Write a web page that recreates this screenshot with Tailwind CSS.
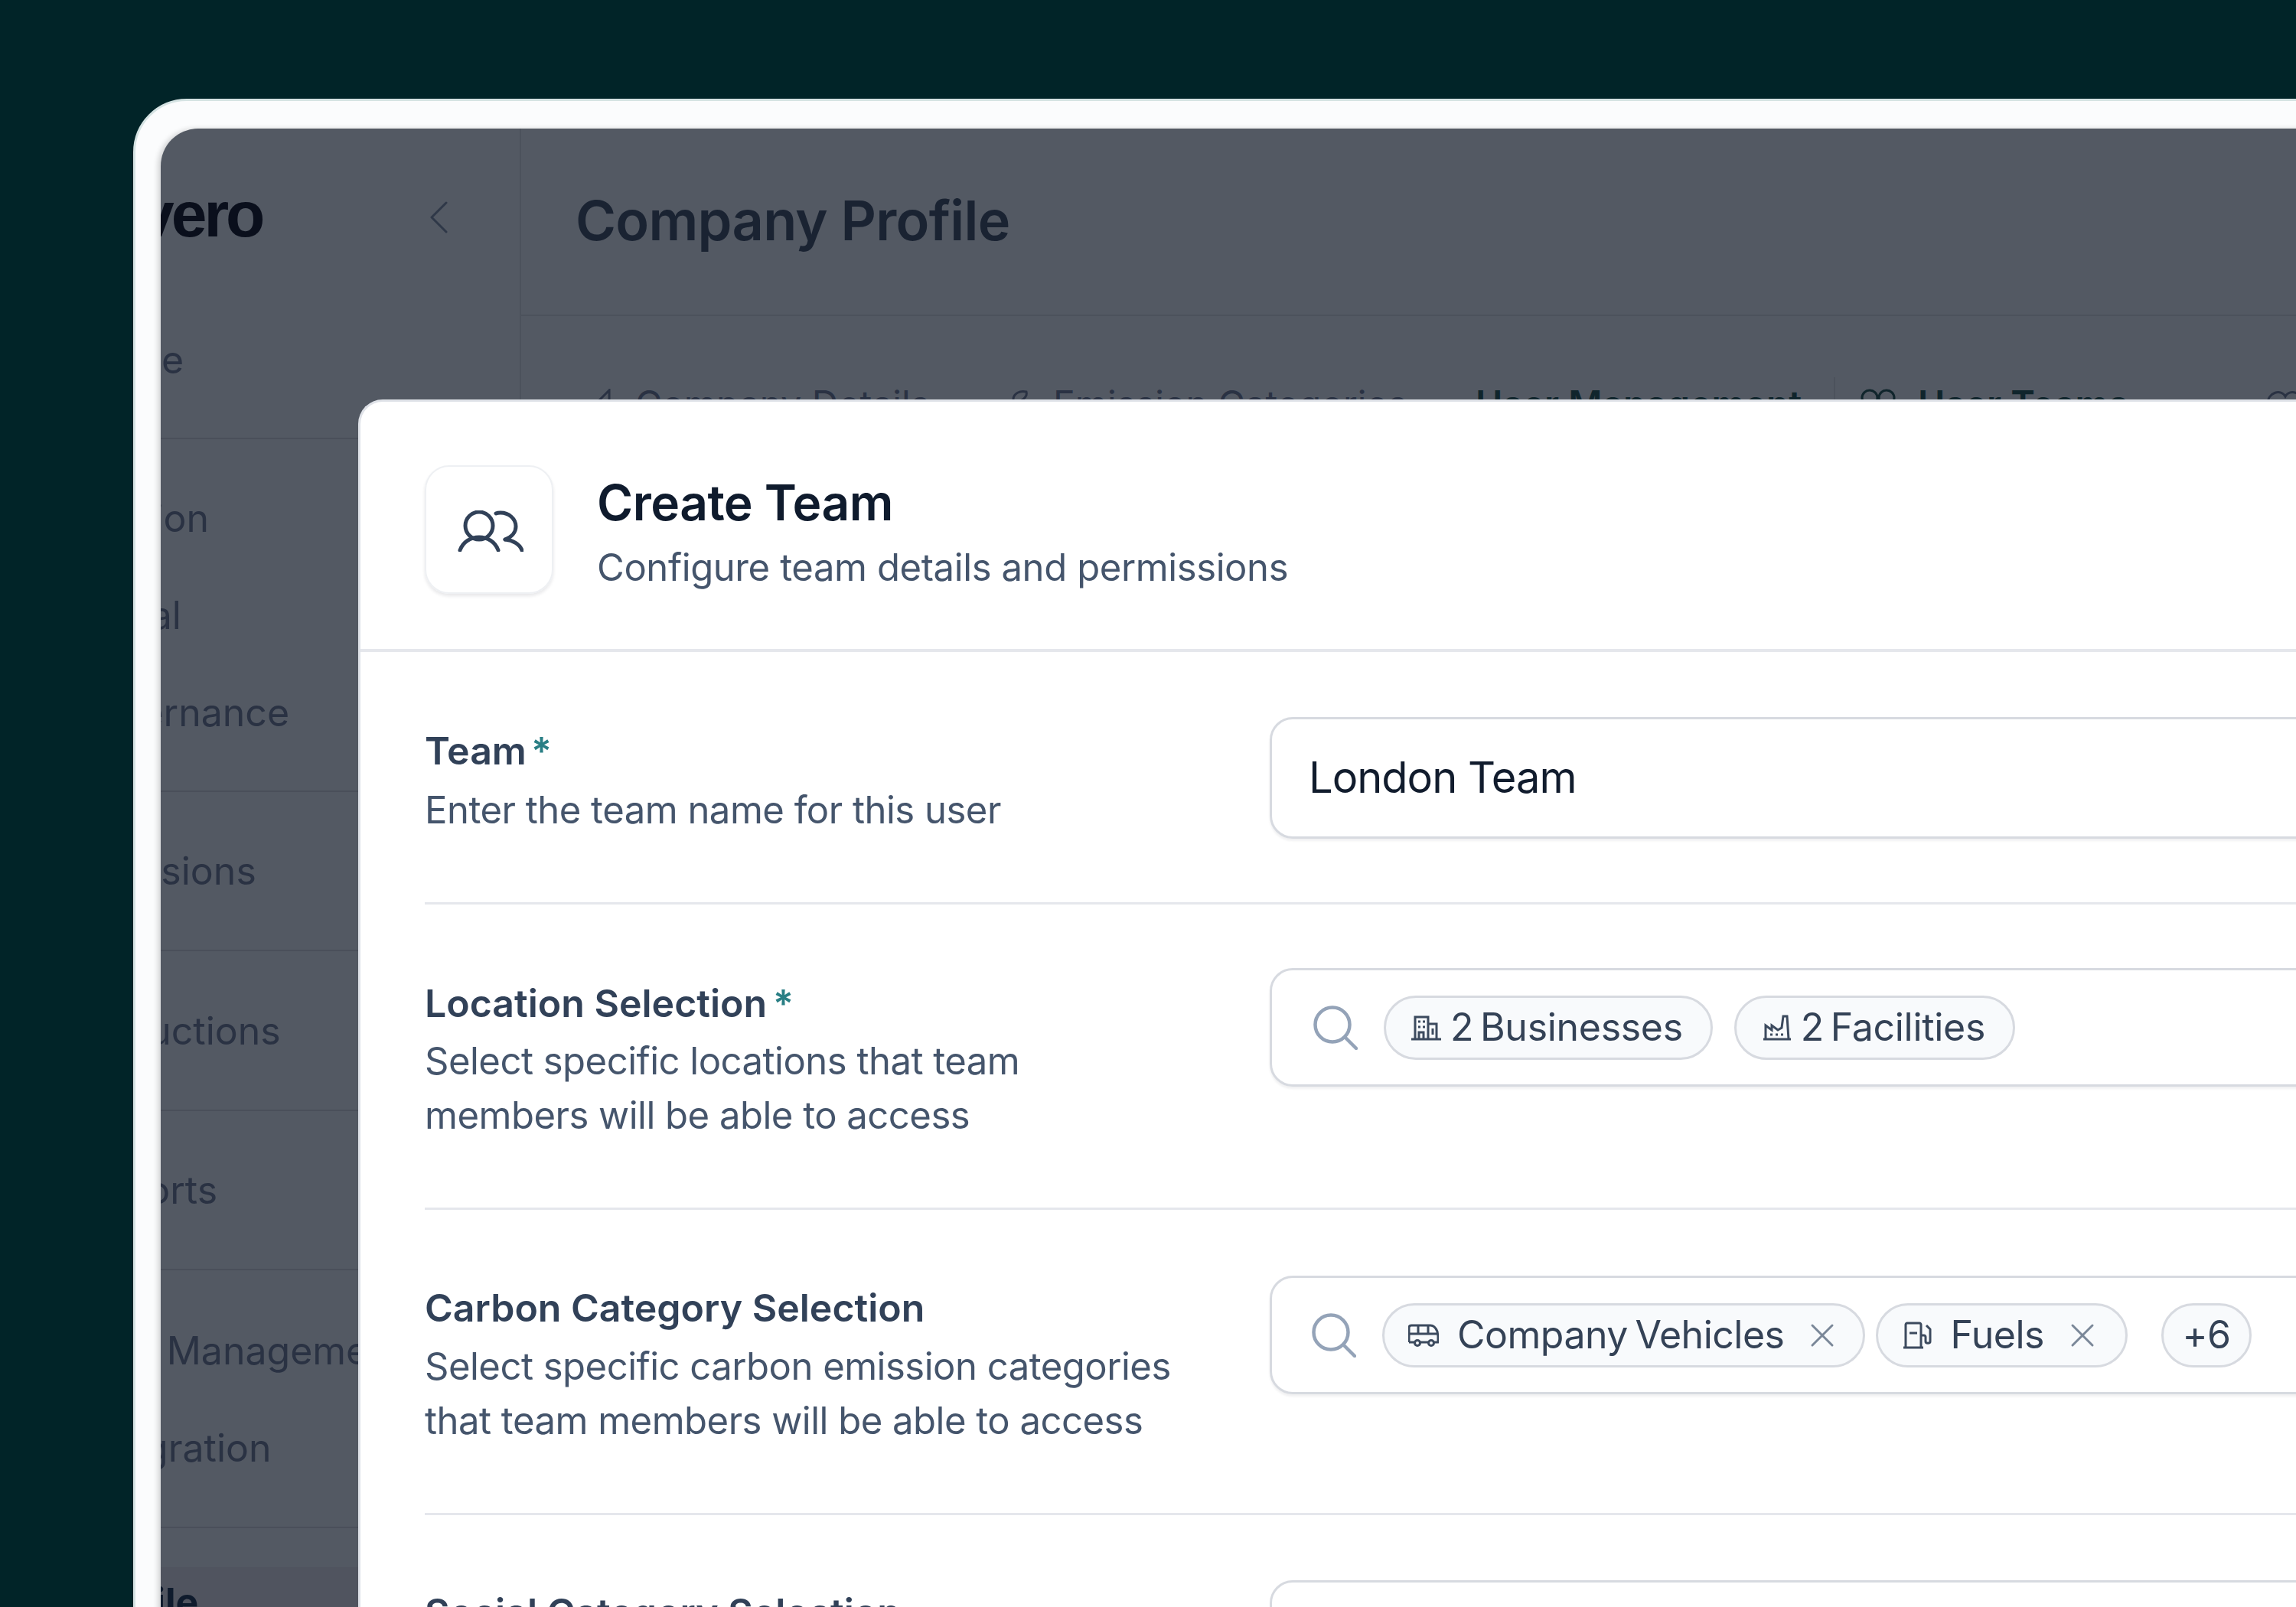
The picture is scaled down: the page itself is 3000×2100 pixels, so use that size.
<!DOCTYPE html>
<html lang="en">
  <head>
    <meta charset="UTF-8" />
    <title>Create Team</title>
    <script src="https://cdn.jsdelivr.net/npm/@tailwindcss/browser@4"></script>
  </head>
  <body class="bg-[#012428]">
    <div class="relative w-[3000px] h-[2100px] overflow-hidden pl-[174px] pt-[129px] font-[Inter,sans-serif]">
      <!-- app frame -->
      <div class="w-[3000px] h-[2100px] rounded-tl-[70px] border-[3px] border-[#d5e3e3] bg-[#fbfcfd] pl-[33px] pt-[36px]">
        <div class="flex h-full rounded-tl-[49px] overflow-hidden bg-[#535963] shadow-[-4px_0_6px_rgba(0,0,0,0.15)]">
          <!-- sidebar -->
          <aside class="w-[471px] shrink-0 border-r-2 border-[#4c525c] text-[#2a3243] text-[50px] leading-[70px]">
            <div class="h-[404px] overflow-hidden">
              <div class="flex items-center justify-between h-[224px] pr-[94px]">
                <span class="font-[Liberation_Sans,sans-serif] font-bold text-[84px] text-[#0a0f1c] tracking-[-4px] ml-[-29px]">vero</span>
                <svg class="w-[24px] h-[42px] mt-[8px]" viewBox="0 0 24 42" fill="none" stroke="#2f3848" stroke-width="3" stroke-linecap="round" stroke-linejoin="round"><path d="M22 2 3 21l19 19" /></svg>
              </div>
              <div class="ml-[-110px] mt-[43px]">Home</div>
            </div>
            <div class="border-t-2 border-[#4a4f5a] pt-[68px] pb-[68px] flex flex-col gap-[57px] ml-[-96px] h-[461px]">
              <div class="ml-[-140px] whitespace-nowrap">Organisation</div>
              <div class="ml-[15px]">Goal</div>
              <div class="ml-[-23px]">Governance</div>
            </div>
            <div class="border-t-2 border-[#4a4f5a] h-[208px] flex items-center"><span class="ml-[-112px]">Emissions</span></div>
            <div class="border-t-2 border-[#4a4f5a] h-[209px] flex items-center"><span class="ml-[-107px]">Reductions</span></div>
            <div class="border-t-2 border-[#4a4f5a] h-[208px] flex items-center"><span class="ml-[-109px]">Reports</span></div>
            <div class="border-t-2 border-[#4a4f5a] h-[337px] flex flex-col gap-[57px] pt-[70px]">
              <div class="ml-[-118px] whitespace-nowrap">User Management</div>
              <div class="ml-[-109px]">Integration</div>
            </div>
            <div class="border-t-2 border-[#4a4f5a] h-[53px]"></div>
            <div class="bg-[#50545f] h-[60px] pt-[10px] font-bold text-[#0f1b2d]"><span class="ml-[-110px]">Profile</span></div>
          </aside>
          <!-- page behind the dialog -->
          <main class="flex-1 text-[#1a2332]">
            <header class="h-[245px] border-b-2 border-[#4c525c] pl-[71px] pt-[82px]">
              <h1 class="font-semibold text-[72px] leading-[76px] tracking-[-0.7px]">Company Profile</h1>
            </header>
            <nav class="flex items-center h-[230px] pl-[77px] text-[48px] leading-[60px] text-[#2a3243] whitespace-nowrap">
              <svg class="w-[40px] h-[40px] mr-[32px]" viewBox="0 0 40 40" fill="none" stroke="#2a3243" stroke-width="3"><path d="M2 38 38 2v36z" /></svg>
              <span class="w-[491px]">Company Details</span>
              <svg class="w-[26px] h-[40px] mr-[29px]" viewBox="0 0 26 40" fill="none" stroke="#2a3243" stroke-width="3"><path d="M3 14C3 6 12 2 20 4 22 10 14 18 6 16" /></svg>
              <span class="w-[552px]">Emission Categories</span>
              <span class="w-[468px] font-semibold text-[#10252c]">User Management</span>
              <span class="w-[35px] h-[70px] border-l-2 border-[#4c525c]"></span>
              <svg class="w-[46px] h-[40px] mr-[29px]" viewBox="0 0 46 40" fill="none" stroke="#10252c" stroke-width="3"><circle cx="12" cy="12" r="10" /><circle cx="34" cy="12" r="10" /></svg>
              <span class="w-[455px] font-semibold text-[#10252c]">User Teams</span>
              <svg class="w-[50px] h-[40px]" viewBox="0 0 50 40" fill="none" stroke="#2a3243" stroke-width="3"><path d="M2 20C2 4 20 0 25 10 30 0 48 4 48 20" /></svg>
            </nav>
          </main>
        </div>
      </div>

      <!-- dialog -->
      <div class="absolute left-[468px] top-[522px] w-[2600px] h-[1620px] rounded-tl-[32px] border-t-[3px] border-l-[3px] border-[#dfe2e8] bg-white overflow-hidden">
        <div class="flex items-center gap-[57px] h-[327px] pl-[84px] pt-[10px] border-b-[4px] border-[#e5e7ec]">
          <div class="flex items-center justify-center w-[168px] h-[168px] rounded-[32px] border-2 border-[#eef0f3] shadow-[0_3px_4px_rgba(15,23,42,0.10)]">
            <svg class="w-[86px] h-[54px] mt-[4px] ml-[4px]" viewBox="0 0 86 54" fill="none" stroke="#314158" stroke-width="5" stroke-linecap="round"><circle cx="28" cy="20" r="18" /><path d="M50 4c2-1 4-1 6-1 11 0 20 8 20 18 0 8-6 14-14 17" /><path d="M3 52c4-11 14-17 25-17s21 6 25 17" /><path d="M62 38c10 1 19 6 22 14" /></svg>
          </div>
          <div class="pt-[8px]">
            <h2 class="font-semibold text-[64px] leading-[80px] text-[#0f1b2d] tracking-[-0.5px]">Create Team</h2>
            <p class="text-[49px] leading-[66px] text-[#45556c] tracking-[-0.4px] mt-[12px]">Configure team details and permissions</p>
          </div>
        </div>

        <div class="pl-[84px] text-[49px] leading-[71px] text-[#45556c] tracking-[-0.5px]">
          <div class="flex border-b-[3px] border-[#e5e7ec] pt-[85px] pb-[83px]">
            <div class="w-[1104px] shrink-0 pt-[9px]">
              <div class="font-semibold text-[50px] tracking-[0px] text-[#314158]">Team<span class="text-[#2a7f85] ml-[6px]">*</span></div>
              <div class="mt-[6px]">Enter the team name for this user</div>
            </div>
            <div class="flex-1 flex items-center h-[159px] rounded-tl-[30px] rounded-bl-[30px] border-[3px] border-[#d7dae0] pl-[48px] text-[56px] tracking-[-1px] text-[#111c2d] shadow-[0_3px_3px_rgba(15,23,42,0.06)]">London Team</div>
          </div>

          <div class="flex border-b-[3px] border-[#e5e7ec] pt-[83px] pb-[85px]">
            <div class="w-[1104px] shrink-0 pt-[11px]">
              <div class="font-semibold text-[50px] tracking-[0px] text-[#314158]">Location Selection<span class="text-[#2a7f85] ml-[8px]">*</span></div>
              <div class="mt-[4px]">Select specific locations that team<br />members will be able to access</div>
            </div>
            <div class="flex-1 flex items-center self-start h-[155px] rounded-tl-[30px] rounded-bl-[30px] border-[3px] border-[#d7dae0] pl-[54px] shadow-[0_3px_3px_rgba(15,23,42,0.06)]">
              <svg class="w-[58px] h-[58px] shrink-0" viewBox="0 0 58 58" fill="none" stroke="#94a3b8" stroke-width="4.5" stroke-linecap="round"><circle cx="25" cy="25" r="22.5" /><path d="m42 42 14 14" /></svg>
              <div class="flex items-center gap-[28px] ml-[34px] text-[#344256] text-[50px] tracking-[-0.3px]">
                <div class="flex items-center h-[84px] pl-[33px] pr-[36px] gap-[12px] rounded-full border-[3px] border-[#d7dae0] bg-[#f8fafc]">
                  <svg class="w-[39px] h-[34px]" viewBox="0 0 39 34" fill="none" stroke="#3c4a5e" stroke-width="3"><path d="M0 32h39M5 32V3h17v29M22 12h11v20M10 32v-9h6v9M9 9h3M15 9h3M9 16h3M15 16h3M28 18v8" /></svg>
                  <span class="[word-spacing:-5px]">2 Businesses</span>
                </div>
                <div class="flex items-center h-[84px] pl-[35px] pr-[36px] gap-[13px] rounded-full border-[3px] border-[#d7dae0] bg-[#f8fafc]">
                  <svg class="w-[36px] h-[34px]" viewBox="0 0 36 34" fill="none" stroke="#3c4a5e" stroke-width="3"><path d="M0 32h36M3 32V14l8 6v-6l8 6 5-3 2-15h5l2 30M9 26h3M16 26h3M23 26h3" /></svg>
                  <span class="[word-spacing:-5px]">2 Facilities</span>
                </div>
              </div>
            </div>
          </div>

          <div class="flex border-b-[3px] border-[#e5e7ec] pt-[86px] pb-[85px]">
            <div class="w-[1104px] shrink-0 pt-[7px]">
              <div class="font-semibold text-[50px] tracking-[0px] text-[#314158]">Carbon Category Selection</div>
              <div class="mt-[5px]">Select specific carbon emission categories<br />that team members will be able to access</div>
            </div>
            <div class="flex-1 flex items-center self-start h-[155px] rounded-tl-[30px] rounded-bl-[30px] border-[3px] border-[#d7dae0] pl-[52px] shadow-[0_3px_3px_rgba(15,23,42,0.06)]">
              <svg class="w-[58px] h-[58px] shrink-0" viewBox="0 0 58 58" fill="none" stroke="#94a3b8" stroke-width="4.5" stroke-linecap="round"><circle cx="25" cy="25" r="22.5" /><path d="m42 42 14 14" /></svg>
              <div class="flex items-center ml-[34px] text-[#344256] text-[50px] tracking-[-0.5px] [word-spacing:-4px]">
                <div class="flex items-center h-[84px] pl-[31px] pr-[37px] rounded-full border-[3px] border-[#d7dae0] bg-[#f8fafc]">
                  <svg class="w-[40px] h-[30px] mr-[24px]" viewBox="0 0 40 30" fill="none" stroke="#3c4a5e" stroke-width="3" stroke-linejoin="round"><path d="M1 24V5c0-2 1-3 3-3h25c4 0 7 3 9 8l1 6v8h-6M9 24H1M15 24h12M1 13h37M13 2v11M26 2v11" /><circle cx="12" cy="25" r="3.5" /><circle cx="30" cy="25" r="3.5" /></svg>
                  <span>Company Vehicles</span>
                  <svg class="w-[32px] h-[32px] ml-[34px]" viewBox="0 0 32 32" fill="none" stroke="#7a8798" stroke-width="3" stroke-linecap="round"><path d="m3 3 26 26M29 3 3 29" /></svg>
                </div>
                <div class="flex items-center h-[84px] pl-[33px] pr-[40px] ml-[14px] rounded-full border-[3px] border-[#d7dae0] bg-[#f8fafc]">
                  <svg class="w-[38px] h-[36px] mr-[23px]" viewBox="0 0 38 36" fill="none" stroke="#3c4a5e" stroke-width="3" stroke-linejoin="round"><path d="M0 34h26M3 34V4c0-1 1-2 2-2h16c1 0 2 1 2 2v30M8 15h10M23 18h4c1 0 2 1 2 2v6c0 3 6 3 6 0V10l-5-5" /></svg>
                  <span>Fuels</span>
                  <svg class="w-[32px] h-[32px] ml-[34px]" viewBox="0 0 32 32" fill="none" stroke="#7a8798" stroke-width="3" stroke-linecap="round"><path d="m3 3 26 26M29 3 3 29" /></svg>
                </div>
                <div class="flex items-center justify-center w-[118px] h-[84px] ml-[44px] rounded-full border-[3px] border-[#d7dae0] bg-[#f8fafc]">+6</div>
              </div>
            </div>
          </div>

          <div class="flex pt-[85px]">
            <div class="w-[1104px] shrink-0 pt-[7px]">
              <div class="font-semibold text-[50px] tracking-[0px] text-[#314158]">Social Category Selection</div>
            </div>
            <div class="flex-1 h-[155px] rounded-tl-[30px] border-[3px] border-[#d7dae0]"></div>
          </div>
        </div>
      </div>
    </div>
  </body>
</html>
